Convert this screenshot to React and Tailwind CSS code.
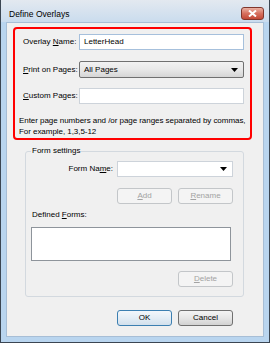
export default function App() {
  const btn =
    "h-[16px] w-[55px] rounded-[3px] border text-[8px] leading-[14px] flex items-center justify-center";
  const enabledBtn =
    btn + " border-[#707070] bg-gradient-to-b from-[#f4f4f4] via-[#e6e6e6] to-[#d2d2d2] text-black";
  const disabledBtn = btn + " border-[#c3c6c9] bg-[#f4f4f4] text-[#a3a3a3]";

  return (
    <div className="w-[270px] h-[343px] flex flex-col bg-[#b9d5ef] border-x border-b border-[#3b4652] font-['Liberation_Sans',Arial,sans-serif] text-[8px] leading-[10px] text-black overflow-hidden">
      {/* Title bar */}
      <div className="h-[22px] shrink-0 flex items-start justify-between bg-gradient-to-b from-[#e3e9f0] to-[#cadcee] pl-[8px] pr-[5px]">
        <span className="mt-[9px] text-[8.5px] leading-[10px]">Define Overlays</span>
        <div className="mt-[7px] w-[23px] h-[13px] rounded-[3px] border border-[#80362c] bg-gradient-to-b from-[#eab1a4] via-[#d6705f] to-[#c24836] flex items-center justify-center">
          <svg width="9" height="7" viewBox="0 0 9 7">
            <path d="M1 0.5 L8 6.5 M8 0.5 L1 6.5" stroke="#ffffff" strokeWidth="2" />
          </svg>
        </div>
      </div>

      {/* Client area */}
      <div className="h-[315px] mx-[5px] flex flex-col bg-[#f0f0f0] border border-[#a7bed6]">
        {/* Highlighted overlay box */}
        <div className="ml-[6px] mt-[4px] w-[239px] h-[113px] border-2 border-[#ff0000] rounded-[4px] pl-[4px] pr-[6px] pt-[5px] flex flex-col">
          <div className="flex items-center h-[16px] pl-[4px]">
            <span className="w-[56px]">
              Overlay <span className="underline">N</span>ame:
            </span>
            <div className="flex-1 h-[16px] border border-[#a6c0dc] bg-white flex items-center pl-[4px]">
              LetterHead
            </div>
          </div>
          <div className="flex items-center h-[17px] mt-[11px] pl-[4px]">
            <span className="w-[56px]">
              <span className="underline">P</span>rint on Pages:
            </span>
            <div className="flex-1 h-[17px] rounded-[2px] border border-[#707070] bg-gradient-to-b from-[#f2f2f2] via-[#e8e8e8] to-[#d5d5d5] flex items-center justify-between pl-[4px] pr-[5px]">
              <span>All Pages</span>
              <svg width="7" height="4" viewBox="0 0 7 4">
                <path d="M0 0 H7 L3.5 4 Z" fill="#000000" />
              </svg>
            </div>
          </div>
          <div className="flex items-center h-[16px] mt-[10px] pl-[4px]">
            <span className="w-[56px]">
              <span className="underline">C</span>ustom Pages:
            </span>
            <div className="flex-1 h-[16px] border border-[#cdd3da] bg-white" />
          </div>
          <p className="mt-[11px] leading-[11px] whitespace-nowrap tracking-[-0.05px]">
            Enter page numbers and /or page ranges separated by commas,
            <br />
            For example, 1,3,5-12
          </p>
        </div>

        {/* Form settings group */}
        <fieldset className="ml-[18px] mt-[6px] w-[219px] border border-[#d3d9df] rounded-[3px] pb-[9px]">
          <legend className="ml-[5px] px-[1px] leading-[10px]">Form settings</legend>
          <div className="flex items-center justify-end pr-[10px] mt-[5px]">
            <span className="mr-[4px]">
              Form Na<span className="underline">m</span>e:
            </span>
            <div className="w-[116px] h-[16px] border border-[#cdd3da] bg-white flex items-center justify-end pr-[5px]">
              <svg width="7" height="4" viewBox="0 0 7 4">
                <path d="M0 0 H7 L3.5 4 Z" fill="#000000" />
              </svg>
            </div>
          </div>
          <div className="flex justify-end gap-[6px] pr-[10px] mt-[11px]">
            <div className={disabledBtn}>
              <span className="underline">A</span>dd
            </div>
            <div className={disabledBtn}>
              <span className="underline">R</span>ename
            </div>
          </div>
          <div className="pl-[6px] mt-[6px] h-[10px]">
            Defined <span className="underline">F</span>orms:
          </div>
          <div className="ml-[5px] mt-[7px] w-[200px] h-[34px] border border-[#8e949b] bg-white" />
          <div className="flex justify-end pr-[10px] mt-[10px]">
            <div className={disabledBtn}>
              <span className="underline">D</span>elete
            </div>
          </div>
        </fieldset>

        {/* Dialog buttons */}
        <div className="flex justify-end gap-[6px] pr-[30px] mt-[13px]">
          <div className={btn + " border-[#3c7fb1] bg-gradient-to-b from-[#f3f7fb] via-[#e4edf5] to-[#d2e0ec] text-black"}>
            OK
          </div>
          <div className={enabledBtn}>Cancel</div>
        </div>
      </div>
    </div>
  );
}
